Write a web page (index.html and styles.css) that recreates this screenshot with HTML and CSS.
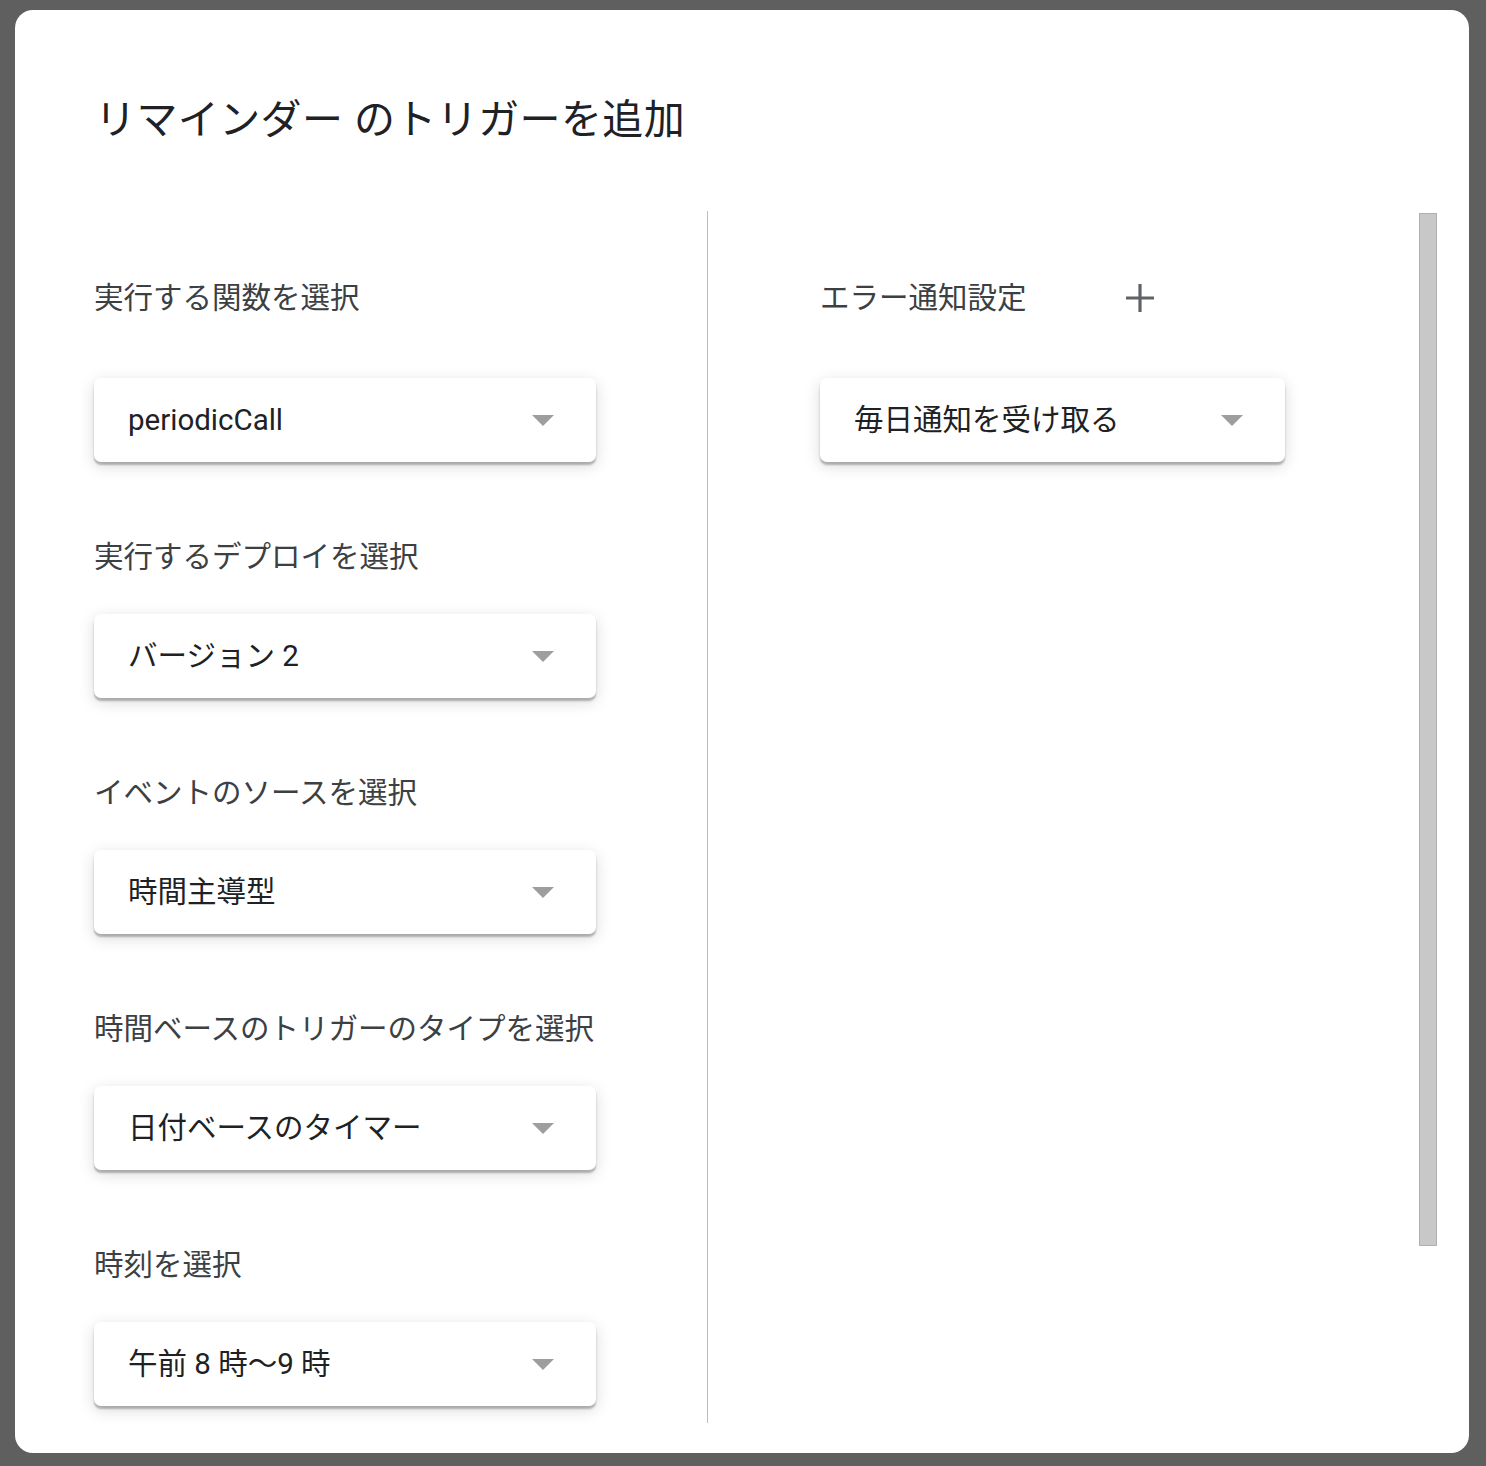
FILE: index.html
```html
<!DOCTYPE html>
<html lang="ja">
<head>
<meta charset="utf-8">
<title>リマインダー のトリガーを追加</title>
<link rel="stylesheet" href="styles.css">
</head>
<body>
<div class="dialog">
  <h1 class="title">リマインダー のトリガーを追加</h1>
  <div class="content">
    <div class="col-left">
      <div class="field first">
        <div class="label">実行する関数を選択</div>
        <div class="select"><span class="value">periodicCall</span><span class="arrow"></span></div>
      </div>
      <div class="field">
        <div class="label">実行するデプロイを選択</div>
        <div class="select"><span class="value ja">バージョン 2</span><span class="arrow"></span></div>
      </div>
      <div class="field">
        <div class="label">イベントのソースを選択</div>
        <div class="select"><span class="value ja">時間主導型</span><span class="arrow"></span></div>
      </div>
      <div class="field">
        <div class="label">時間ベースのトリガーのタイプを選択</div>
        <div class="select"><span class="value ja">日付ベースのタイマー</span><span class="arrow"></span></div>
      </div>
      <div class="field">
        <div class="label">時刻を選択</div>
        <div class="select"><span class="value ja">午前 8 時〜9 時</span><span class="arrow"></span></div>
      </div>
    </div>
    <div class="divider"></div>
    <div class="col-right">
      <div class="field first">
        <div class="label-row">
          <div class="label">エラー通知設定</div>
          <svg class="plus" width="30" height="30" viewBox="0 0 30 30"><path d="M15 1v28M1 15h28" stroke="#5f6368" stroke-width="3.2" fill="none"/></svg>
        </div>
        <div class="select narrow"><span class="value ja">毎日通知を受け取る</span><span class="arrow"></span></div>
      </div>
    </div>
    <div class="scrollbar"></div>
  </div>
</div>
</body>
</html>
```

FILE: styles.css
```css
html, body {
  margin: 0;
  padding: 0;
}
body {
  background: #5f5f5f;
  width: 1486px;
  height: 1466px;
  overflow: hidden;
  font-family: Roboto, "Noto Sans CJK JP", sans-serif;
  padding-top: 10px;
  box-sizing: border-box;
}
.dialog {
  margin-left: 15px;
  width: 1454px;
  height: 1443px;
  background: #fff;
  border-radius: 18px;
  overflow: hidden;
  box-sizing: border-box;
}
.title {
  margin: 0;
  padding: 86px 0 0 80px;
  font-size: 41px;
  line-height: 48px;
  font-weight: 400;
  color: #202124;
  letter-spacing: 0.4px;
}
.content {
  margin-top: 67px;
  display: flex;
  align-items: flex-start;
}
.col-left {
  width: 692px;
  box-sizing: border-box;
  padding: 67px 0 0 79px;
  display: flex;
  flex-direction: column;
}
.divider {
  width: 1px;
  height: 1212px;
  background: #bdbdbd;
}
.col-right {
  flex: 1;
  padding: 67px 0 0 112px;
}
.field {
  margin-bottom: 75px;
}
.label {
  font-size: 29.5px;
  line-height: 40px;
  color: #3c4043;
  margin-bottom: 37px;
  white-space: nowrap;
}
.field.first .label {
  margin-bottom: 60px;
}
.label-row {
  display: flex;
  align-items: flex-start;
}
.plus {
  margin-left: 98px;
  margin-top: 5px;
}
.select {
  width: 502px;
  height: 84px;
  box-sizing: border-box;
  background: #fff;
  border-radius: 7px;
  box-shadow: 0 3px 2px rgba(0, 0, 0, 0.26), 0 4px 16px rgba(0, 0, 0, 0.15);
  display: flex;
  align-items: center;
  padding: 0 42px 0 34px;
}
.select.narrow {
  width: 465px;
}
.value {
  flex: 1;
  font-size: 29.5px;
  color: #202124;
  white-space: nowrap;
}
.value.ja {
  margin-bottom: 6px;
}
.arrow {
  width: 0;
  height: 0;
  border-left: 11px solid transparent;
  border-right: 11px solid transparent;
  border-top: 11px solid #9e9e9e;
}
.scrollbar {
  width: 16px;
  height: 1031px;
  margin-top: 2px;
  margin-right: 32px;
  background: #c8c8c8;
  border: 1px solid #b0b0b0;
}
```
